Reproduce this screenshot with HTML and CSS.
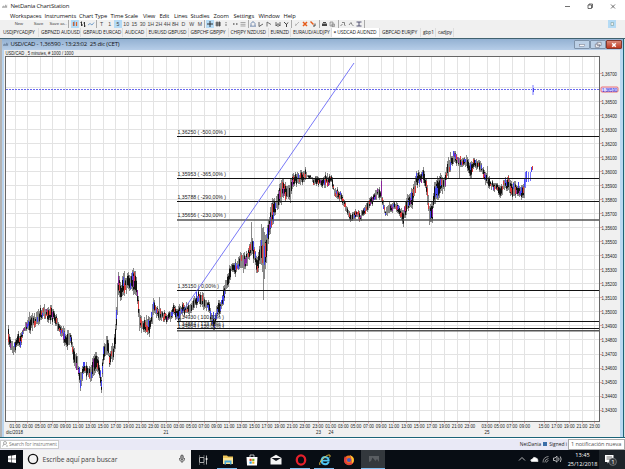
FILE: index.html
```html
<!DOCTYPE html>
<html lang="es">
<head>
    <meta charset="UTF-8">
    <title>NetDania ChartStation</title>
    <link rel="stylesheet" href="styles.css">
</head>
<body>
    <!-- Barra de título -->
    <header class="titlebar">
        <svg class="app-icon" viewBox="0 0 7 6"><path d="M0 5V3L1 4L2 2L3 4L4 1L5 3L6 1V5Z" fill="#aaa"/></svg>
        <span class="app-title">NetDania ChartStation</span>
        <svg class="win-controls" viewBox="0 0 60 10" fill="none" stroke="#333" stroke-width=".7">
            <path d="M2 5.500H7M25 4H28.500V7.500H25ZM26 4V3H29.500V6.500H28.500M48 3.500L52 7.500M52 3.500L48 7.500"/>
        </svg>
    </header>

    <nav class="menu">
        <span>Workspaces</span><span>Instruments</span><span>Chart Type</span><span>Time Scale</span><span>View</span><span>Edit</span><span>Lines</span><span>Studies</span><span>Zoom</span><span>Settings</span><span>Window</span><span>Help</span>
    </nav>

    <!-- Herramientas -->
    <div class="toolbar">
        <div class="group files"><span>New</span><span>Save</span><span>Save as..</span></div>
        <div class="group types">
            <span class="active"><svg viewBox="0 0 8 8"><path d="M2.500 2V6M5.500 2V6" stroke="#e0622c" stroke-width="1.200"/><path d="M3.300 1.500V6" stroke="#3474b0" stroke-width=".6"/></svg></span>
            <span><svg viewBox="0 0 8 8"><path d="M2.500 1.500V6M1.500 2.500H2.500M2.500 5H4M5.500 2V7M4.500 3H5.500M5.500 6H6.500" stroke="#222" stroke-width=".9"/></svg></span>
            <span><svg viewBox="0 0 8 8"><path d="M1 5L3 3.500L5 5L7 2.500" fill="none" stroke="#5b8ec4" stroke-width=".8"/></svg></span>
        </div>
        <div class="group scale">
            <span>T</span><span>1</span><span class="active">5</span><span>10</span><span>15</span><span>30</span><span>1H</span><span>2H</span><span>4H</span><span>8H</span><span>D</span><span>W</span><span>M</span>
        </div>
        <div class="group view">
            <span class="active"><svg viewBox="0 0 8 8"><path d="M4 1V7M1 4H7" stroke="#222" stroke-width=".9"/></svg></span>
            <span><svg viewBox="0 0 8 8"><path d="M3 1.500V6.500M5.300 1.500V6.500M1.500 3H7M1.500 5H7" stroke="#222" stroke-width=".8"/></svg></span>
            <span><svg viewBox="0 0 8 8"><path d="M4 2V3M4 3.800V6" stroke="#666" stroke-width=".9"/></svg></span>
            <span><svg viewBox="0 0 8 8"><path d="M2 4H3.500M5 4H6.500" stroke="#222" stroke-width="1.200"/></svg></span>
            <span><svg viewBox="0 0 8 8"><path d="M1.500 2.500H6.500M1.500 4.300H6.500M1.500 6H6.500" stroke="#888" stroke-width=".7"/></svg></span>
        </div>
        <div class="group lines">
            <span><svg viewBox="0 0 8 8"><path d="M2 6V3.500Q4 0 6 3.500V6M1 6.200H7" fill="none" stroke="#5d7aa5" stroke-width=".8"/></svg></span>
            <span><svg viewBox="0 0 8 8"><path d="M2 2V6.500L6 4" fill="none" stroke="#444" stroke-width=".8"/></svg></span>
            <span><svg viewBox="0 0 8 8"><path d="M2 2V6.500M2 2L6 4.500" fill="none" stroke="#555" stroke-width=".8"/></svg></span>
            <span><svg viewBox="0 0 8 8"><path d="M2 2V6L4 3.500L6 6V2M3 6H5" fill="none" stroke="#444" stroke-width=".8"/></svg></span>
            <span><svg viewBox="0 0 8 8"><path d="M2 2L4.500 4.500L6 2.500M4.500 4V7" fill="none" stroke="#333" stroke-width=".9"/></svg></span>
        </div>
        <div class="group edit">
            <span><svg viewBox="0 0 8 8"><path d="M2 6L6 2M2 4L4 5" stroke="#aaa" stroke-width=".8"/></svg></span>
            <span><svg viewBox="0 0 8 8"><path d="M2 2L6 6M6 2L2 6" stroke="#e65b1a" stroke-width="1.500"/></svg></span>
            <span><svg viewBox="0 0 8 8"><path d="M1.500 1.500L4.500 4.500" stroke="#e65b1a" stroke-width="1.400"/><path d="M4 6H6V3.500" fill="none" stroke="#444"/></svg></span>
        </div>
        <div class="group print">
            <span><svg viewBox="0 0 8 8"><path d="M2 3.500H7V6H2ZM3 2H6V3H3Z" fill="#444"/></svg></span>
            <span><svg viewBox="0 0 8 8"><path d="M2 2H5V6H2ZM4 4H6.500V6.500H4Z" fill="#ddd" stroke="#777" stroke-width=".6"/></svg></span>
        </div>
        <div class="group zoom">
            <span><svg viewBox="0 0 8 8"><path d="M1.500 6L3.500 4M3 2.500H5.500V5L6.500 6" fill="none" stroke="#777" stroke-width=".9"/></svg></span>
            <span><svg viewBox="0 0 8 8"><path d="M2 5L4 2.500L5 4.500L6.500 6" fill="none" stroke="#777" stroke-width=".9"/></svg></span>
            <span><svg viewBox="0 0 8 8"><path d="M1.500 2H6.500M1.500 6H6.500M4 2V6" stroke="#446" stroke-width=".9"/></svg></span>
        </div>
        <span class="help active"><svg viewBox="0 0 8 8"><path d="M3 2.500H5.500V5.500H3Z" fill="#eee" stroke="#8aa" stroke-width=".7"/></svg></span>
    </div>

    <div class="tabs">
        <span>USDJPYCADJPY</span><span>GBPNZD AUDUSD</span><span>GBPAUD EURCAD</span><span>AUDCAD</span><span>EURUSD GBPUSD</span><span>GBPCHF GBPJPY</span><span>CHFJPY NZDUSD</span><span>EURNZD</span><span>EURAUD/AUDJPY</span><span class="selected"><b>×</b> USDCAD AUDNZD</span><span>GBPCAD EURJPY</span><span>gbp1</span><span>cadjpy</span>
    </div>

    <!-- Ventana del gráfico -->
    <main class="window">
        <div class="window-title">
            <svg class="app-icon" viewBox="0 0 7 6"><path d="M0 5V3L1 4L2 2L3 4L4 1L5 3L6 1V5Z" fill="#7188a4"/></svg>
            <span>USD/CAD - 1,36590 - 13:23:02&nbsp; 25 dic (CET)</span>
            <div class="window-buttons">
                <i><svg viewBox="0 0 15 9"><rect x="4.500" y="4" width="6" height="1.800" fill="#fff" stroke="#667" stroke-width=".5"/></svg></i>
                <i><svg viewBox="0 0 15 9"><path d="M6.500 1.500H11V5H6.500ZM4.500 3.500H9V7H4.500Z" fill="#fff" stroke="#667" stroke-width=".7"/></svg></i>
                <i class="close"><svg viewBox="0 0 15 9"><path d="M5.500 2.500L9.500 6.500M9.500 2.500L5.500 6.500" stroke="#fff" stroke-width="1.700"/></svg></i>
            </div>
        </div>
        <svg class="chart" id="chart" viewBox="0 50 625 387"></svg>
    </main>

    <div class="status">
        <div class="search"><svg viewBox="0 0 8 8"><circle cx="4" cy="3" r="1.500" fill="none" stroke="#777" stroke-width=".6"/><path d="M3 4L1.500 6.500M5 6H7" stroke="#777" stroke-width=".6"/></svg>Search for instrument</div>
        <div class="account"><span>NetDania</span><b></b><span>Signed i</span></div>
        <div class="notice">1 notificación nueva</div>
    </div>

    <!-- Barra de tareas -->
    <footer class="taskbar">
        <div class="start"><svg viewBox="0 0 10 10"><path d="M1 2L4.500 1.500V4.700H1ZM5 1.400L9 .8V4.700H5ZM1 5.200H4.500V8.400L1 8ZM5 5.200H9V9.100L5 8.500Z" fill="#fff"/></svg></div>
        <div class="cortana">
            <svg class="ring" viewBox="0 0 12 12"><circle cx="6" cy="6" r="4.600" fill="none" stroke="#111" stroke-width="1.400"/></svg>
            <span>Escribe aquí para buscar</span>
            <svg class="mic" viewBox="0 0 8 10"><rect x="2.700" y="1" width="2.600" height="5" rx="1.300" fill="#999" stroke="#333" stroke-width=".6"/><path d="M1.500 4V5.500Q1.500 7.300 4 7.300T6.500 5.500V4M4 7.300V9" fill="none" stroke="#333" stroke-width=".7"/></svg>
        </div>
        <div class="apps">
            <div><svg viewBox="0 0 12 12"><path d="M1.500 3.500H6V8.500H1.500ZM1.500 2.500V1.500M6 2.500V1.500M1.500 9.500V10.500M6 9.500V10.500M8.500 1.500V10.500" fill="none" stroke="#bbb" stroke-width=".9"/><path d="M7.700 5H9.500" stroke="#fff" stroke-width="1.500"/></svg></div>
            <div class="open"><svg viewBox="0 0 12 12"><path d="M1 1.500H5L6 2.500H11V10H1Z" fill="#efc65a"/><path d="M1 4H11V10H1Z" fill="#fbe394"/><path d="M2.500 10.500V6.500H9.500V10.500H8V8.500H4V10.500Z" fill="#46a9dc"/></svg></div>
            <div><svg viewBox="0 0 12 12"><path d="M4 3V1H8V3" fill="none" stroke="#fff" stroke-width=".7"/><path d="M.5 3H11.500L11 11.500H1Z" fill="#fff"/><path d="M3.500 4.800H5.700V7H3.500Z" fill="#e64a26"/><path d="M6.200 4.800H8.400V7H6.200Z" fill="#75b52a"/><path d="M3.500 7.500H5.700V9.700H3.500Z" fill="#2799e0"/><path d="M6.200 7.500H8.400V9.700H6.200Z" fill="#f6b719"/></svg></div>
            <div><svg viewBox="0 0 12 12"><path d="M.5 4L6 .8L11.500 4V10.500H.5Z" fill="#f5f5f5"/><path d="M1.500 4L6 7L11 4Z" fill="#10141c"/></svg></div>
            <div class="open"><svg viewBox="0 0 12 12"><ellipse cx="6" cy="6" rx="4.200" ry="4.700" fill="none" stroke="#e5202b" stroke-width="2.300"/></svg></div>
            <div class="open"><svg viewBox="0 0 12 12"><path d="M9.800 8Q8.500 10.300 6 10.200Q2.500 9.800 2.500 6.500Q3 3 6.200 3Q9.700 3.300 9.700 6.600H3" fill="none" stroke="#4cc3f0" stroke-width="1.900"/><path d="M1 11Q-.5 9 4 4.500Q9 0 11 1.200Q11.500 2 10.500 3.500" fill="none" stroke="#f2c63c" stroke-width=".9"/></svg></div>
            <div><svg viewBox="0 0 12 12"><circle cx="6" cy="6.300" r="4.900" fill="#f1731d"/><path d="M1.100 6L1.500 2.500L4 4Q2 7 4.500 9Q8 10 8.500 6.500L7 2L10 3.500Q12 8 8.500 10.500Q4 12 1.500 8.500Z" fill="#e43a3d"/><path d="M7 1Q11.500 3 10.800 7Q10 9 8.500 9.500Q9.500 6 7 1Z" fill="#fbc52f"/><circle cx="6" cy="6" r="2.100" fill="#4a58bd"/></svg></div>
            <div class="open current"><svg viewBox="0 0 12 12"><path d="M1 2H11V8L9 5L7.500 7L4.500 3.500L3 7L1 8Z" fill="#5a5e62"/></svg></div>
        </div>
        <div class="tray">
            <svg viewBox="0 0 50 12" fill="none" stroke="#ddd" stroke-width=".8">
                <path d="M3 7.500L6 4.500L9 7.500"/>
                <path d="M15.500 8.500Q13.500 6.500 16.500 6Q17.500 3 20 5Q22 5 22 8.500Z" fill="#fff"/>
                <path d="M27 9.500Q27 4 32.500 3.500M28.800 9.500Q29 6 32.500 5.500M30.500 9.500Q31 7.500 32.500 7.500" stroke="#aaa"/>
                <path d="M37.500 5H39L41 3.200V9.200L39 7.500H37.500ZM42.500 4.700Q43.500 6 42.500 7.700M44.300 3.500Q46 6 44.300 9"/>
            </svg>
        </div>
        <div class="clock"><span>13:45</span><span>25/12/2018</span></div>
        <div class="center"><svg viewBox="0 0 14 14"><path d="M1 2H9.500V9H5L3.500 10.500V9H1Z" fill="#fff"/><path d="M2.500 4H8M2.500 6H6" stroke="#333" stroke-width=".7"/><circle cx="8.800" cy="8.800" r="3.700" fill="#34383c" stroke="#8b8f92" stroke-width=".6"/><text x="7.300" y="11">1</text></svg></div>
    </footer>

    <script>
        const chart = document.getElementById("chart");
        let out = "";

        function line(x1, y1, x2, y2, cls) {
            out += `<line x1="${x1}" y1="${y1}" x2="${x2}" y2="${y2}" class="${cls}"/>`;
        }

        function text(x, y, w, str, cls) {
            out += `<text x="${x}" y="${y}" textLength="${w}" lengthAdjust="spacingAndGlyphs" class="${cls}">${str}</text>`;
        }

        out += '<rect x="5" y="56" width="595" height="366" fill="#fff"/>';
        text(5.5, 55, 68, "USD/CAD , 5 minutes, # 1000 / 1000", "label");

        // Horas del eje X: [x, hora]
        const hours = [];
        for (let i = 0; i < 24; i++) {
            hours.push([15 + i * 12.6, (1 + i * 2) % 24]);
        }
        for (let i = 0; i < 13; i++) {
            hours.push([318 + i * 12.65, (23 + i * 2) % 24]);
        }
        [[487, 3], [499.5, 5], [512, 7], [524.7, 9], [544, 15], [556.7, 17], [569.3, 19], [582, 21], [594.6, 23]].forEach(h => hours.push(h));

        hours.forEach(([x, h]) => {
            const gx = Math.floor(x) + 0.5;
            line(gx, 57, gx, 421, "grid");
            line(gx, 421, gx, 423.5, "tick");
            text(x - 5.4, 428, 10.8, String(h).padStart(2, "0") + ":00", "label");
        });
        [[163.5, "21"], [316, "23"], [328.5, "24"], [484.5, "25"]].forEach(([x, d]) => text(x, 434, 5, d, "label"));
        text(6, 434, 17, "dic/2018", "label");

        // Precios del eje Y
        for (let i = 0; i <= 24; i++) {
            const y = 73.6 + i * 14.02;
            const gy = Math.floor(y) + 0.5;
            line(6, gy, 599, gy, "grid");
            if (i !== 1) {
                line(599, gy, 602, gy, "tick");
                text(601.5, y + 2, 15.5, "1," + (36700 - i * 100), "label");
            }
        }

        // Velas: [x, máximo, mínimo]
        const points = [
            [8, 328, 343], [11, 339, 351], [13, 345, 355], [17, 333, 347], [20, 333, 348], [25, 320, 330], [30, 317, 332], [35, 314, 326],
            [40, 307, 321], [44, 306, 318], [50, 307, 322], [54, 309, 322], [57, 317, 330], [62, 325, 338], [66, 333, 350], [70, 331, 343],
            [73, 344, 362], [77, 358, 372], [80, 372, 390], [83, 361, 375], [87, 366, 378], [90, 366, 380], [95, 349, 372], [98, 358, 374],
            [101, 374, 393], [103, 348, 362], [107, 335, 352], [109, 350, 366], [113, 344, 360], [115, 322, 346], [117, 285, 315],
            [118, 274, 297], [121, 281, 300], [124, 272, 296], [126, 277, 292], [130, 272, 290], [133, 268, 292], [136, 275, 294], [139, 310, 330],
            [143, 319, 332], [147, 316, 333], [149, 320, 338], [153, 300, 316], [158, 308, 320], [164, 312, 322], [168, 313, 323], [173, 305, 317],
            [178, 308, 322], [182, 303, 316], [188, 305, 316], [193, 299, 311], [198, 291, 304], [203, 295, 308], [208, 300, 312], [211, 310, 325],
            [214, 316, 329], [217, 302, 318], [220, 302, 314], [224, 282, 299], [228, 269, 287], [231, 262, 274], [235, 262, 277], [239, 254, 268],
            [244, 254, 272], [248, 248, 262], [252, 236, 258], [257, 256, 273], [260, 236, 262], [262, 225, 270], [263, 228, 292], [266, 232, 262],
            [269, 215, 237], [272, 200, 228], [275, 198, 214], [277, 190, 208], [280, 184, 206], [282, 179, 200], [286, 184, 200], [290, 180, 203],
            [293, 172, 188], [297, 173, 185], [303, 170, 183], [305, 168, 180], [307, 175, 178], [311, 176, 179], [313, 178, 184], [317, 176, 185], [320, 179, 187],
            [325, 174, 186], [331, 174, 184], [334, 187, 197], [340, 191, 200], [345, 202, 210], [350, 214, 222], [355, 208, 218], [360, 213, 221],
            [365, 205, 214], [370, 198, 208], [375, 191, 200], [377, 187, 197], [380, 190, 200], [385, 208, 219], [390, 201, 212], [396, 201, 210],
            [400, 206, 220], [403, 210, 225], [407, 195, 212], [412, 188, 208], [416, 173, 189], [420, 171, 184], [423, 169, 182], [426, 178, 195],
            [429, 204, 224], [432, 198, 220], [434, 180, 203], [440, 173, 195], [444, 174, 191], [447, 158, 178], [450, 155, 170], [454, 151, 162],
            [458, 157, 166], [463, 158, 168], [466, 156, 168], [470, 165, 181], [473, 159, 170], [478, 158, 170], [482, 166, 175], [485, 170, 184],
            [490, 180, 188], [495, 183, 191], [500, 187, 197], [504, 179, 190], [508, 176, 190], [512, 183, 200], [518, 183, 195], [523, 186, 201], [525, 172, 190]
        ];

        let seed = 7;
        function rnd() {
            seed = (seed * 16807) % 2147483647;
            return seed / 2147483647;
        }

        for (let i = 0; i < points.length - 1; i++) {
            const [xa, ha, la] = points[i];
            const [xb, hb, lb] = points[i + 1];
            for (let x = xa; x < xb; x++) {
                const t = (x - xa) / (xb - xa);
                const height = la - ha;
                const jitter = Math.min(height * 0.45, 7);
                const top = Math.round(ha + (hb - ha) * t + (rnd() - 0.4) * jitter);
                const bottom = Math.round(la + (lb - la) * t + (rnd() - 0.6) * jitter);
                const size = bottom - top;
                const mid = hb + lb - ha - la;
                line(x + 0.5, top, x + 0.5, bottom, "wick");
                if (rnd() < 0.68) {
                    line(x + 0.5, top + size * 0.2, x + 0.5, bottom - size * 0.2, "body");
                }
                if (rnd() < 0.55) {
                    const start = Math.round(top + size * rnd() * 0.6);
                    const up = rnd() < (mid < 0 ? 0.65 : 0.35);
                    const cls = rnd() < 0.15 ? "violet" : up ? "up" : "down";
                    line(x + 0.5, start, x + 0.5, start + Math.round(size * 0.4), cls);
                }
            }
        }

        // Mechas largas
        [[29, 312, 320], [159, 297, 312], [251, 222, 242], [261, 224, 240], [263, 280, 300], [381, 178, 200], [459, 158, 178], [487, 166, 182]].forEach(([x, a, b]) => line(x + 0.5, a, x + 0.5, b, "wick"));
        line(381.5, 181, 381.5, 196, "violet");
        line(525.5, 172, 525.5, 188, "light");
        line(526.5, 171, 526.5, 182, "up");
        line(528.5, 172, 528.5, 182, "light");
        line(530.5, 172, 530.5, 181, "light");
        line(531.5, 167, 531.5, 172, "up");
        line(532.5, 166, 532.5, 170, "down");

        // Niveles de Fibonacci
        [[136.5, "1,36250 ( -500,00% )"], [178.5, "1,35953 ( -365,00% )"], [201.5, "1,35788 ( -290,00% )"], [220, "1,35656 ( -230,00% )", "soft"], [290.5, "1,35150 ( 0,00% )"], [321.5, "1,34930 ( 100,00% )"], [328.5, "1,34884 ( 123,60% )"], [330.8, "1,34864 ( 130,00% )", "soft"]].forEach(([y, str, cls]) => {
            line(177, y, 600, y, "level " + (cls || ""));
            text(177.5, y - 2.6, str.length < 18 ? 41.5 : str.length < 20 ? 46.5 : 48.5, str, "label");
        });

        line(177, 319.5, 354, 63, "trend");

        // Precio actual
        line(6, 89.5, 599, 89.5, "current-price");
        line(533, 85, 533, 95, "quote");
        line(533.5, 88, 533.5, 92, "up");
        out += '<rect x="601" y="87" width="17" height="5" rx="1" class="price-box"/>';
        text(602, 91.5, 15, "1,36590", "label price");

        out += '<rect x="5.5" y="56.5" width="594" height="365" class="border"/>';
        chart.innerHTML = out;
    </script>
</body>
</html>
```
FILE: styles.css
```css
* {
    box-sizing: border-box;
}

body {
    margin: 0;
    width: 625px;
    height: 469px;
    overflow: hidden;
    display: flex;
    flex-direction: column;
    font-family: "Open Sans", sans-serif;
    background: #fff;
    color: #222;
    white-space: nowrap;
}

svg {
    display: block;
}

.titlebar {
    height: 12px;
    display: flex;
    align-items: center;
    padding-left: 2px;
}

.app-icon {
    width: 6px;
    height: 6px;
    margin-right: 2.5px;
}

.app-title {
    font-size: 6px;
    letter-spacing: -0.2px;
}

.win-controls {
    width: 60px;
    height: 10px;
    margin-left: auto;
    margin-right: 2px;
}

.menu {
    height: 8px;
    padding-left: 10px;
    display: grid;
    grid-template-columns: 34.5px 34.5px 31.5px 32.5px 16.5px 14.5px 16.5px 23px 20px 25px 25px 20px;
    font-size: 5.8px;
    letter-spacing: -0.12px;
    line-height: 8px;
    color: #111;
}

.toolbar {
    height: 9px;
    display: flex;
    align-items: center;
    background: #f0f0f0;
    font-family: "Liberation Sans", Arial, sans-serif;
    font-size: 5.2px;
    color: #444;
}

.group {
    height: 8px;
    display: flex;
    align-items: center;
    border-right: 1px solid #aaa;
}

.group span,
.help {
    width: 8.22px;
    height: 8px;
    line-height: 8px;
    text-align: center;
}

.group svg,
.help svg {
    width: 8px;
    height: 8px;
}

.toolbar .active {
    background: #b5dbf5;
}

.files {
    width: 69px;
    padding-left: 9px;
    font-size: 4.2px;
}

.files span {
    width: 20px;
}

.types {
    width: 28px;
    padding-left: 2px;
}

.scale {
    width: 108px;
    padding-left: 0.5px;
}

.view {
    width: 44px;
    padding-left: 1px;
}

.lines {
    width: 43px;
}

.edit {
    width: 28px;
    padding-left: 1px;
}

.print {
    width: 18.5px;
}

.zoom {
    width: 26px;
}

.help {
    margin-left: auto;
    margin-right: 9px;
}

.tabs {
    height: 10px;
    display: grid;
    grid-template-columns: 38px 42px 42px 23.5px 42px 40px 40px 22.5px 40.5px 48.5px 41px 15px 18px;
    padding-left: 1px;
    background: #f0f0f0;
    font-size: 4.9px;
    line-height: 9px;
}

.tabs span {
    height: 9px;
    padding-left: 2px;
    border-right: 1px solid #ddd;
    letter-spacing: -0.15px;
}

.tabs .selected {
    background: #fff;
}

.window {
    height: 400px;
    border-top: 1px solid #41626f;
    border-bottom: 1px solid #1c6478;
    background: linear-gradient(90deg, #b4b4b4 2px, #b9d4ee 2px, #b9d4ee 4px, #f0f0f0 4px, #f0f0f0 620.5px, #b9d9f2 620.5px, #b9d9f2 623px, #1c6478 623px, #1c6478 624px, #ddd 624px);
}

.window-title {
    height: 11px;
    display: flex;
    align-items: center;
    margin: 0 2px;
    padding: 0 1px;
    background: linear-gradient(#93b1d2, #b6cde8);
    font-size: 6px;
    letter-spacing: -0.2px;
    color: #111;
}

.window-title .app-icon {
    margin-right: 1.5px;
}

.window-buttons {
    display: flex;
    margin-left: auto;
}

.window-buttons i {
    width: 16px;
    height: 9px;
    border: 1px solid #7f93aa;
    border-radius: 1px;
    background: #bcd0e6;
}

.window-buttons svg {
    width: 14px;
    height: 8px;
}

.window-buttons .close {
    background: linear-gradient(#d98878, #c03a22);
    border-color: #84372c;
}

.chart {
    width: 625px;
    height: 387px;
}

.label {
    font-family: "Liberation Sans", Arial, sans-serif;
    font-size: 5.3px;
    fill: #222;
}

.grid {
    stroke: #e3e3e3;
}

.tick {
    stroke: #d88;
    stroke-width: 0.7;
}

.wick {
    stroke: #888;
}

.body {
    stroke: #111;
}

.up {
    stroke: #4545ee;
}

.down {
    stroke: #d83c3c;
}

.violet {
    stroke: #8a259c;
}

.light {
    stroke: #7777ff;
}

.level {
    stroke: #111;
    stroke-width: 1.1;
}

.soft {
    stroke: #555;
    stroke-width: 1.6;
}

.trend {
    stroke: #5555f5;
    stroke-width: 0.8;
}

.current-price {
    stroke: #6a6af0;
    stroke-dasharray: 2 1;
}

.quote {
    stroke: #bcbcff;
    stroke-width: 2;
}

.price-box {
    fill: #dcdcff;
    stroke: #f05050;
    stroke-width: 0.8;
}

.price {
    fill: #2222dd;
}

.border {
    fill: none;
    stroke: #666;
}

.status {
    height: 11px;
    margin-top: 1px;
    display: flex;
    align-items: center;
    background: #e9e9f6;
}

.search {
    width: 59px;
    height: 9px;
    display: flex;
    align-items: center;
    border: 1px solid #ccc;
    background: #fff;
    color: #777;
    font-size: 4.9px;
    letter-spacing: -0.1px;
}

.search svg {
    width: 8px;
    height: 8px;
    flex: none;
}

.account {
    display: flex;
    align-items: center;
    gap: 2px;
    margin-left: auto;
    margin-right: 1px;
    font-size: 4.9px;
}

.account b {
    width: 4px;
    height: 4px;
    background: #3a6ea8;
}

.notice {
    width: 57px;
    height: 11px;
    padding-left: 2px;
    border: 1px solid #aaa;
    background: #fff;
    font-size: 5.6px;
    letter-spacing: -0.1px;
    line-height: 9px;
    color: #555;
}

.taskbar {
    height: 19px;
    display: flex;
    background: #080d14;
    color: #fff;
}

.start {
    width: 23px;
    padding: 4px 0 0 7px;
}

.start svg {
    width: 10px;
    height: 10px;
}

.cortana {
    width: 168px;
    display: flex;
    align-items: center;
    padding: 0 5px 0 4px;
    background: #f2f2f2;
    color: #444;
    font-size: 6.7px;
    letter-spacing: -0.07px;
}

.ring {
    width: 12px;
    height: 12px;
    margin-right: 3.5px;
}

.mic {
    width: 8px;
    height: 10px;
    margin-left: auto;
}

.apps {
    display: flex;
}

.apps div {
    width: 24.3px;
    height: 19px;
    padding: 4px 0 0 6.5px;
    background: linear-gradient(#7fbff0, #7fbff0) 2px 18px / 0 1px no-repeat;
}

.apps svg {
    width: 12px;
    height: 12px;
}

.apps .open {
    background-size: 20px 1px;
}

.apps .current {
    background-color: #33383d;
    background-position: 0 18px;
    background-size: 24px 1px;
}

.tray {
    margin-left: auto;
    padding-top: 3px;
}

.tray svg {
    width: 50px;
    height: 12px;
}

.clock {
    width: 33px;
    display: flex;
    flex-direction: column;
    align-items: center;
    padding-top: 1px;
    font-size: 5.6px;
    line-height: 9px;
}

.center {
    width: 26px;
    background: #1d2329;
    padding: 3px 0 0 5px;
}

.center svg {
    width: 14px;
    height: 14px;
}

.center text {
    font-size: 6px;
    fill: #fff;
}
```
